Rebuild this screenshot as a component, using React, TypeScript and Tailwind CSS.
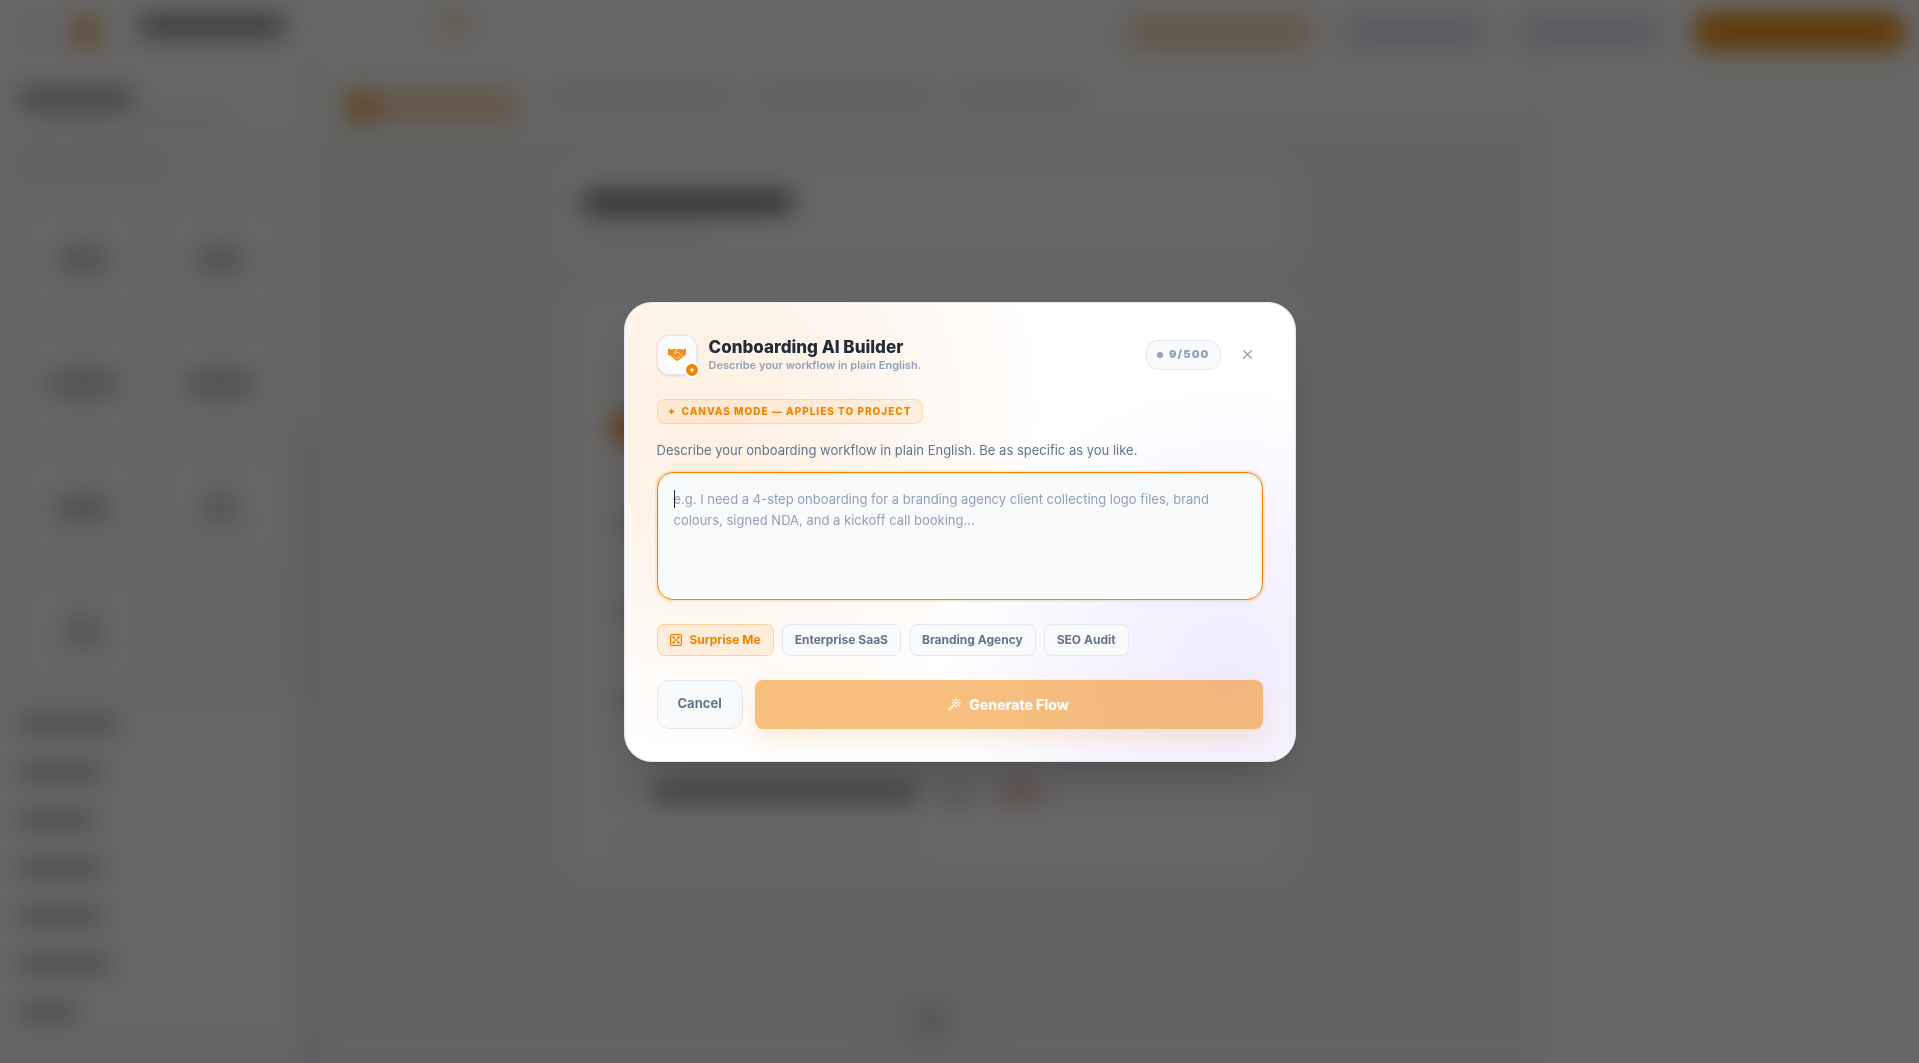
import { BsMagic } from 'react-icons/bs';
import { X } from 'lucide-react';

const presets = ['Enterprise SaaS', 'Branding Agency', 'SEO Audit'];

const tabs = ['w-44', 'w-42', 'w-30'];

const blocks = ['w-12', 'w-12', 'w-18', 'w-18', 'w-14', 'w-8', 'w-8'];

const groups = ['w-24', 'w-20', 'w-18', 'w-20', 'w-20', 'w-22', 'w-14'];

const fields = ['w-56', 'w-64', 'w-48'];

const Sparkle = ({ className }: { className?: string }) => (
    <svg viewBox="0 0 12 12" fill="currentColor" className={className} aria-hidden="true">
        <path d="M6 0C6.5 3.3 8.7 5.5 12 6C8.7 6.5 6.5 8.7 6 12C5.5 8.7 3.3 6.5 0 6C3.3 5.5 5.5 3.3 6 0Z" />
    </svg>
);

const Dice = ({ className }: { className?: string }) => (
    <svg viewBox="0 0 12 12" fill="currentColor" className={className} aria-hidden="true">
        <rect x="0.6" y="0.6" width="10.8" height="10.8" rx="1" fill="none" stroke="currentColor" strokeWidth="1.2" />
        <circle cx="3.6" cy="3.6" r="1.3" />
        <circle cx="8.4" cy="3.6" r="1.3" />
        <circle cx="6" cy="6" r="1.3" />
        <circle cx="3.6" cy="8.4" r="1.3" />
        <circle cx="8.4" cy="8.4" r="1.3" />
    </svg>
);

const Handshake = ({ className }: { className?: string }) => (
    <svg viewBox="0 0 36 26" className={className} aria-hidden="true">
        <path d="M0 1L7 3L13 1.5L18 3L23 1.5L29 3L36 1V14L32 15.5L27 21L19 26L15 24L6 17L4 14.5L0 14Z" fill="currentColor" />
        <path d="M18 3L12.5 9C14 11.5 17 11 20 8.5L29 16" fill="none" stroke="#fff" strokeWidth="1.6" />
        <path d="M6 17L9.5 13.5M9.5 20L13 16M13.5 23L16.5 19M20 15L26 20.5M17.5 18L22 23" fill="none" stroke="#fff" strokeWidth="1.3" />
    </svg>
);

const TopBar = () => (
    <header className="h-16 shrink-0 flex items-center justify-between bg-white border-b border-neutral-100 pl-8 pr-4">
        <div className="flex items-center">
            <div className="w-4 h-4 rounded bg-neutral-200" />
            <div className="w-7 h-7 ml-6 rounded-lg bg-[#f2a040]/80" />
            <div className="ml-10 pb-3">
                <div className="w-36 h-4 rounded bg-neutral-500" />
            </div>
            <div className="w-9 h-4 ml-38 mb-4 rounded-full bg-[#fbd6b0]" />
        </div>
        <div className="flex items-center gap-8">
            <div className="w-46 h-8 rounded-xl bg-[#fbd6b0]" />
            <div className="w-36 h-6 rounded-xl bg-slate-300/80" />
            <div className="w-36 h-6 rounded-xl bg-slate-300/80" />
            <div className="w-52 h-9 rounded-xl bg-[#f28c10]" />
        </div>
    </header>
);

const Sidebar = () => (
    <aside className="w-80 shrink-0 flex bg-[#f7faf8] border-r border-neutral-100">
        <div className="flex-1">
            <div className="bg-white px-5 pt-7 pb-3">
                <div className="w-28 h-3 rounded bg-neutral-500" />
                <div className="w-52 h-2 mt-3 rounded bg-neutral-200" />
            </div>
            <div className="h-8 mx-5 mt-2 flex items-center gap-3 px-3">
                <div className="w-4 h-4 rounded-full bg-neutral-300" />
                <div className="w-24 h-3 rounded bg-slate-200" />
            </div>
            <div className="grid grid-cols-2 gap-5 px-6 mt-8 mb-4">
                {blocks.map((width, index) => (
                    <div key={index} className="h-26 flex flex-col items-center gap-2 rounded-xl bg-white border border-neutral-100 pt-5">
                        <div className="w-4 h-4 rounded bg-neutral-200" />
                        <div className={`${width} h-3 rounded bg-neutral-400`} />
                        <div className="w-14 h-2 rounded bg-neutral-200" />
                    </div>
                ))}
            </div>
            <div className="bg-white">
                {groups.map((width, index) => (
                    <div key={index} className="h-12 flex items-center px-5">
                        <div className={`${width} h-3 rounded bg-neutral-400`} />
                    </div>
                ))}
            </div>
        </div>
        <div className="w-4 mt-92 bg-slate-200" />
    </aside>
);

const Canvas = () => (
    <main className="flex-1 bg-[#f6faf8]">
        <div className="h-15 flex items-center gap-8 bg-white border-b border-neutral-100 px-6">
            <div className="w-44 h-8 mt-6 flex items-center rounded-lg bg-[#fbd6b0]">
                <div className="w-8 h-8 rounded-lg bg-[#f2b060]" />
            </div>
            {tabs.map((width, index) => (
                <div key={index} className={`${width} h-3 mt-2 rounded bg-slate-300/80`} />
            ))}
        </div>
        <div className="max-w-[716px] mx-auto mt-10">
            <div className="h-24 rounded-2xl bg-white px-3 pt-7">
                <div className="w-52 h-5 rounded bg-[#66686c]" />
                <div className="w-32 h-2 mt-4 rounded bg-slate-300" />
            </div>
            <div className="h-[573px] flex flex-col justify-between rounded-2xl bg-white mt-9 pt-30 pb-6 px-10">
                <div className="w-12 h-6 rounded-lg bg-[#f28301]" />
                {fields.map((width, index) => (
                    <div key={index} className={`${width} h-3 rounded bg-neutral-300`} />
                ))}
                <div>
                    <div className="flex items-center gap-6">
                        <div className="w-4 h-4 rounded bg-neutral-200" />
                        <div className="w-66 h-3 rounded bg-neutral-500" />
                        <div className="w-8 h-4 rounded bg-slate-300" />
                        <div className="w-12 h-4 rounded-full bg-red-300/80" />
                    </div>
                    <div className="w-76 h-2 mt-9 rounded bg-neutral-200/60" />
                </div>
            </div>
            <div className="w-36 h-20 mx-auto mt-28 flex items-center justify-center rounded-full bg-neutral-200/40">
                <div className="w-4 h-5 rounded-full bg-neutral-400" />
            </div>
        </div>
    </main>
);

const BuilderModal = () => (
    <section
        role="dialog"
        aria-labelledby="builder-title"
        className="w-full max-w-2xl rounded-[28px] border border-slate-200 bg-white bg-[radial-gradient(circle_350px_at_12%_24%,#fef1e3_0%,#fef4ea_35%,#fffbf8_75%,transparent_100%),radial-gradient(circle_290px_at_90%_80%,#f0ecfd_0%,#f5f1fe_35%,#fcfbff_80%,transparent_100%)] p-8 shadow-2xl"
    >
        <div className="flex items-center justify-between">
            <div className="flex items-center gap-3">
                <div className="relative w-10 h-10 flex items-center justify-center rounded-xl bg-slate-50 border border-slate-200 shadow-sm">
                    <div className="w-[22px] h-[22px] flex items-center justify-center rounded-sm bg-white">
                        <Handshake className="w-[18px] h-[13px] text-[#f28c13]" />
                    </div>
                    <span className="absolute -right-1 -bottom-1 w-4 h-4 flex items-center justify-center rounded-full bg-[#f28301] border-2 border-white text-white">
                        <Sparkle className="w-[6px] h-[6px]" />
                    </span>
                </div>
                <div>
                    <h2 id="builder-title" className="text-[17px] leading-5 font-extrabold text-[#262b3a]">Conboarding AI Builder</h2>
                    <p className="text-[11px] leading-4 font-semibold text-slate-400">Describe your workflow in plain English.</p>
                </div>
            </div>
            <div className="flex items-center gap-3">
                <span className="h-[30px] flex items-center gap-[6px] rounded-xl bg-slate-50 border border-slate-200 px-[10px] text-[11px] font-black tracking-widest text-slate-400">
                    <span className="w-[6px] h-[6px] rounded-full bg-slate-400" />
                    9/500
                </span>
                <button type="button" aria-label="Close" className="w-[30px] h-[30px] flex items-center justify-center text-slate-400">
                    <X size={15} strokeWidth={2.25} />
                </button>
            </div>
        </div>

        <div className="w-fit h-[25px] mt-6 flex items-center gap-[7px] rounded-lg bg-[#f28301]/8 border border-[#f28301]/20 px-[10px] text-[10px] font-extrabold uppercase tracking-widest text-[#f28301]">
            <Sparkle className="w-[7px] h-[7px]" />
            Canvas mode — applies to project
        </div>

        <label htmlFor="workflow" className="block mt-4 mb-3 text-[13px] leading-5 text-slate-500">
            Describe your onboarding workflow in plain English. Be as specific as you like.
        </label>
        <div className="relative">
            <textarea
                id="workflow"
                placeholder="e.g. I need a 4-step onboarding for a branding agency client collecting logo files, brand colours, signed NDA, and a kickoff call booking..."
                className="block w-full h-32 resize-none rounded-2xl bg-slate-50 border border-[#f28301] ring-2 ring-[#f28301]/15 outline-none px-4 py-4 text-[13px] leading-[21px] text-slate-800 placeholder:text-slate-400 shadow-inner"
            />
            <span className="absolute left-[17px] top-[18px] w-px h-[18px] bg-slate-800" />
        </div>

        <div className="flex gap-2 mt-6">
            <button type="button" className="h-8 flex items-center gap-2 rounded-lg bg-[#f28301]/10 border border-[#f28301]/25 px-3 text-xs font-bold text-[#f28301]">
                <Dice className="w-3 h-3" />
                Surprise Me
            </button>
            {presets.map((preset) => (
                <button key={preset} type="button" className="h-8 rounded-lg bg-slate-50 border border-slate-200 px-3 text-xs font-bold text-slate-500">
                    {preset}
                </button>
            ))}
        </div>

        <div className="flex gap-3 mt-6">
            <button type="button" className="h-[49px] rounded-xl bg-slate-50 border border-slate-200 px-5 text-[13px] font-bold text-slate-500">
                Cancel
            </button>
            <button type="button" className="flex-1 h-[49px] flex items-center justify-center gap-2 rounded-lg bg-[#f28301] opacity-50 text-[14px] font-extrabold text-white shadow-[0_10px_24px_rgba(242,131,1,0.3)]">
                <BsMagic className="w-[13px] h-[13px]" strokeWidth={0.6} />
                Generate Flow
            </button>
        </div>
    </section>
);

const App = () => {
    return (
        <div className="h-screen overflow-hidden bg-white font-['Inter',sans-serif]">
            <div aria-hidden="true" className="h-full flex flex-col">
                <TopBar />
                <div className="flex-1 flex min-h-0">
                    <Sidebar />
                    <Canvas />
                    <aside className="w-[380px] shrink-0 bg-white border-l border-neutral-200" />
                </div>
            </div>

            {/* Dimmed overlay with the builder dialog */}
            <div className="fixed inset-0 flex items-center justify-center p-4 bg-black/60 backdrop-blur-md">
                <BuilderModal />
            </div>
        </div>
    );
};

export default App;
